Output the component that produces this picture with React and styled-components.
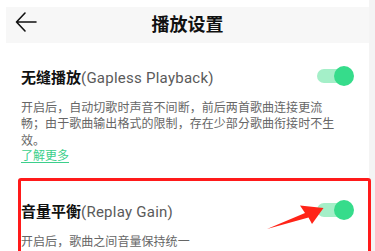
import React from "react";
import styled, { createGlobalStyle } from "styled-components";

const GlobalStyle = createGlobalStyle`
  body {
    margin: 0;
    background: #ffffff;
    font-family: Roboto, "Noto Sans CJK SC", sans-serif;
  }
`;

function BackIcon() {
  return (
    <svg width="24" height="24" viewBox="0 0 24 24" fill="none">
      <path
        d="M21 12H1.5M10 3L1.5 12L10 21"
        stroke="#111"
        strokeWidth="1.6"
        strokeLinecap="round"
        strokeLinejoin="round"
      />
    </svg>
  );
}

function Toggle({ on }) {
  return (
    <Switch>
      <Track />
      <Knob $on={on} />
    </Switch>
  );
}

function Setting({ title, english, desc, link, marked }) {
  return (
    <Section $marked={marked}>
      <TitleRow>
        <Title>
          <strong>{title}</strong>
          <English>({english})</English>
        </Title>
        <Toggle on />
      </TitleRow>
      <Desc>{desc}</Desc>
      {link && <MoreLink href="#">{link}</MoreLink>}
      {marked && (
        <Pointer viewBox="260 198 70 35" width="70" height="35">
          <polygon
            points="267,229 305,213 300,205.5 323.5,208 312,224 308.5,217.5"
            fill="#ff2418"
          />
        </Pointer>
      )}
    </Section>
  );
}

export default function App() {
  return (
    <>
      <GlobalStyle />
      <Page>
        <Main>
          <Header>
            <BackIcon />
            <HeaderTitle>播放设置</HeaderTitle>
            <Spacer />
          </Header>
          <Setting
            title="无缝播放"
            english="Gapless Playback"
            desc="开启后，自动切歌时声音不间断，前后两首歌曲连接更流畅；由于歌曲输出格式的限制，存在少部分歌曲衔接时不生效。"
            link="了解更多"
          />
          <Setting
            title="音量平衡"
            english="Replay Gain"
            desc="开启后，歌曲之间音量保持统一"
            marked
          />
        </Main>
        <SideStrip />
      </Page>
    </>
  );
}

const Page = styled.div`
  display: flex;
  width: 375px;
  height: 251px;
  overflow: hidden;
`;

const Main = styled.div`
  width: 369px;
  display: flex;
  flex-direction: column;
`;

const SideStrip = styled.div`
  width: 6px;
  background: #f4f4f4;
`;

const Header = styled.div`
  display: flex;
  align-items: flex-start;
  margin: 7px 0 0 6px;
  padding-left: 9px;
  height: 36px;
  background: #f7f7f7;

  svg {
    margin-top: 3px;
    flex-shrink: 0;
  }
`;

const HeaderTitle = styled.h1`
  flex: 1;
  margin: 0;
  padding-right: 9px;
  text-align: center;
  font-family: "Noto Sans CJK SC", sans-serif;
  font-size: 18px;
  font-weight: 700;
  line-height: 32px;
  color: #111;
`;

const Spacer = styled.div`
  width: 24px;
`;

const Section = styled.section`
  position: relative;
  padding: ${(p) => (p.$marked ? "22px" : "23px")} 15px 0 21px;
  margin-top: ${(p) => (p.$marked ? "14.75px" : "0")};

  &::after {
    content: ${(p) => (p.$marked ? '""' : "none")};
    position: absolute;
    left: 18px;
    right: -2px;
    top: 0;
    height: 120px;
    border: 3px solid #ff1a1a;
    border-radius: 3px;
    box-sizing: border-box;
    pointer-events: none;
  }
`;

const TitleRow = styled.div`
  display: flex;
  align-items: center;
  justify-content: space-between;
  height: 22px;
`;

const Title = styled.div`
  font-family: "Noto Sans CJK SC", sans-serif;
  font-size: 15px;
  line-height: 22px;
  color: #111;
  white-space: nowrap;

  strong {
    font-weight: 700;
  }
`;

const English = styled.span`
  font-family: Roboto, sans-serif;
  font-weight: 400;
  letter-spacing: 0.25px;
  color: #5a5a5a;
`;

const Switch = styled.div`
  position: relative;
  width: 37px;
  height: 20px;
  margin-top: -2px;
`;

const Track = styled.div`
  position: absolute;
  left: 0;
  top: 3px;
  width: 30px;
  height: 14px;
  border-radius: 7px;
  background: #a4efc8;
`;

const Knob = styled.div`
  position: absolute;
  right: 0;
  top: 0;
  width: 20px;
  height: 20px;
  border-radius: 50%;
  background: #36dc8b;
`;

const Desc = styled.p`
  margin: 10.75px 0 0;
  max-width: 320px;
  font-family: "Noto Sans CJK SC", sans-serif;
  font-size: 12px;
  letter-spacing: 0.05px;
  line-height: 16.5px;
  color: #666;
`;

const MoreLink = styled.a`
  display: block;
  width: max-content;
  margin-top: -1px;
  font-family: "Noto Sans CJK SC", sans-serif;
  font-size: 12px;
  line-height: 16px;
  color: #3ccf8b;
  text-decoration: underline;
  text-underline-offset: 2px;
`;

const Pointer = styled.svg`
  position: absolute;
  left: 260px;
  top: 20px;
`;
